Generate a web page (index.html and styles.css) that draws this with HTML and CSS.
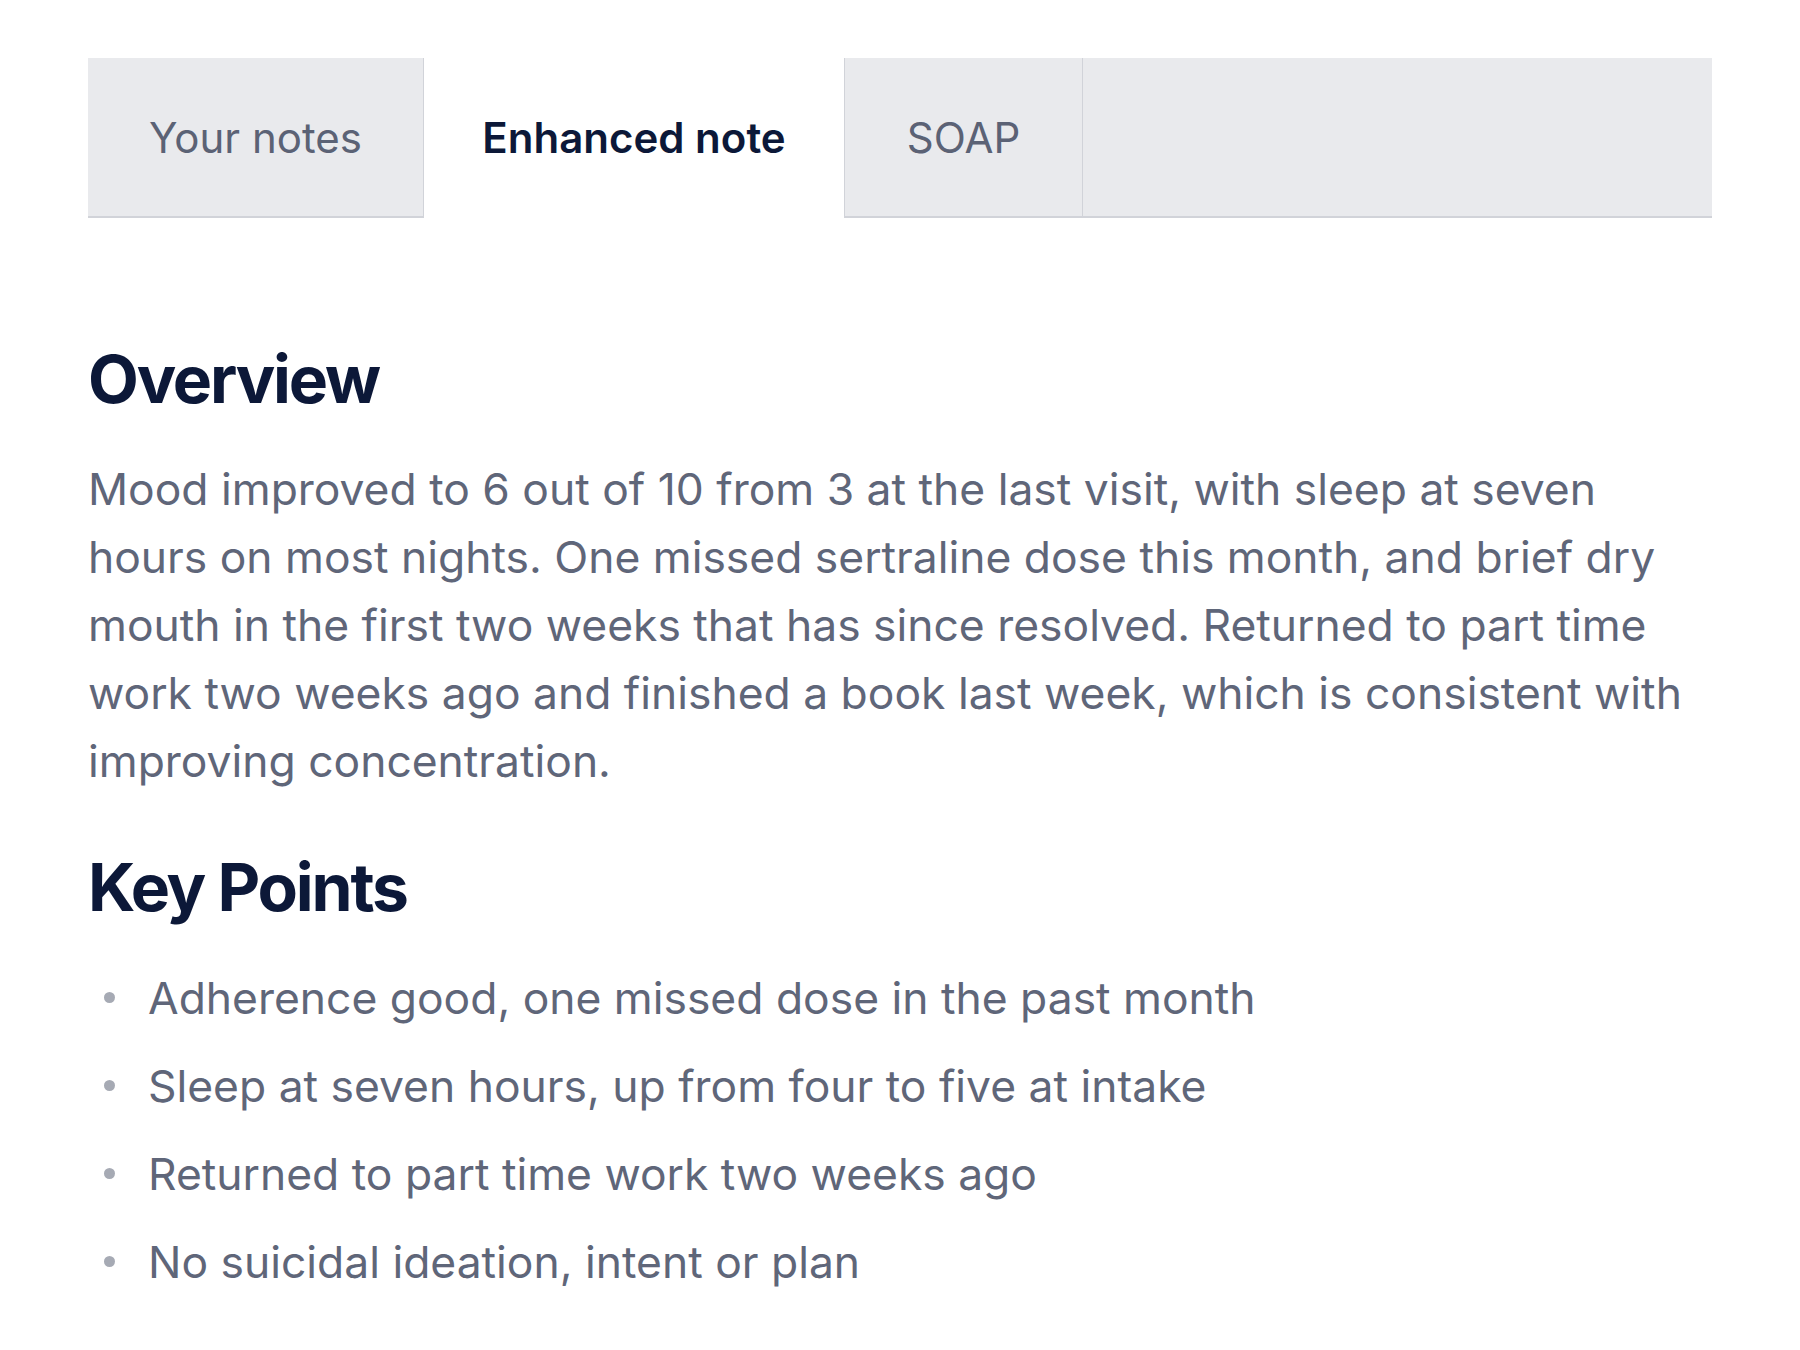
FILE: index.html
```html
<!DOCTYPE html>
<html lang="en">
<head>
<meta charset="utf-8">
<title>Enhanced note</title>
<link rel="stylesheet" href="styles.css">
</head>
<body>
<main class="page">
  <nav class="tabs">
    <div class="tab tab-first">Your notes</div>
    <div class="tab tab-active">Enhanced note</div>
    <div class="tab tab-soap">SOAP</div>
    <div class="tab-fill"></div>
  </nav>
  <section class="note">
    <h2 class="heading heading-overview">Overview</h2>
    <p class="body-text">Mood improved to 6 out of 10 from 3 at the last visit, with sleep at seven hours on most nights. One missed sertraline dose this month, and brief dry mouth in the first two weeks that has since resolved. Returned to part time work two weeks ago and finished a book last week, which is consistent with improving concentration.</p>
    <h2 class="heading heading-points">Key Points</h2>
    <ul class="points">
      <li class="point">Adherence good, one missed dose in the past month</li>
      <li class="point">Sleep at seven hours, up from four to five at intake</li>
      <li class="point">Returned to part time work two weeks ago</li>
      <li class="point">No suicidal ideation, intent or plan</li>
    </ul>
  </section>
</main>
</body>
</html>
```
FILE: styles.css
```css
* { box-sizing: border-box; }

html, body {
  margin: 0;
  padding: 0;
  background: #ffffff;
}

body {
  font-family: Inter, "Noto Sans", "Liberation Sans", sans-serif;
  -webkit-font-smoothing: antialiased;
}

.page {
  padding: 58px 88px 0 88px;
}

.tabs {
  display: flex;
  height: 160px;
}

.tab {
  display: flex;
  align-items: center;
  justify-content: center;
  flex: none;
  white-space: nowrap;
  font-size: 42px;
  color: #5b6275;
  background: #e9eaed;
  border-bottom: 2px solid #d1d3d9;
}

.tab-first {
  width: 336px;
  border-right: 1px solid #d1d3d9;
}

.tab-active {
  width: 420px;
  background: #ffffff;
  border-bottom-color: transparent;
  color: #0c1838;
  font-weight: 600;
}

.tab-soap {
  width: 239px;
  border-left: 1px solid #d1d3d9;
  border-right: 1px solid #d1d3d9;
}

.tab-fill {
  flex: 1;
  background: #e9eaed;
  border-bottom: 2px solid #d1d3d9;
}

.note {
  padding-top: 121px;
}

.heading {
  margin: 0;
  font-size: 66px;
  line-height: 80px;
  font-weight: 700;
  color: #0c1838;
  letter-spacing: -2.2px;
}

.body-text {
  margin: 36px 0 0 0;
  font-size: 44.4px;
  line-height: 68px;
  color: #5f6679;
  max-width: 1606px;
}

.heading-points {
  margin-top: 52px;
}

.points {
  list-style: none;
  margin: 37px 0 0 0;
  padding: 0;
  display: flex;
  flex-direction: column;
  gap: 20px;
}

.point {
  position: relative;
  padding-left: 60px;
  font-size: 44.4px;
  line-height: 68px;
  color: #5f6679;
}

.point::before {
  content: "";
  position: absolute;
  left: 16px;
  top: 28px;
  width: 11px;
  height: 11px;
  border-radius: 50%;
  background: #a6aab4;
}
```
